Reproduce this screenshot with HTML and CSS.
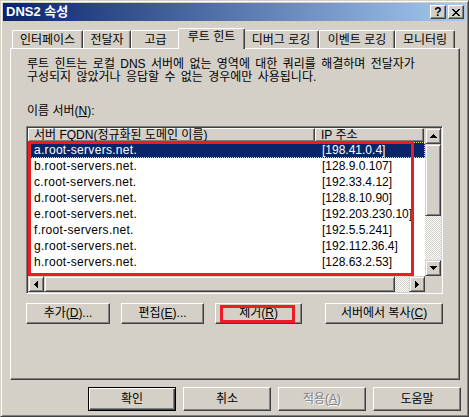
FILE: index.html
```html
<!DOCTYPE html>
<html lang="ko">
<head>
<meta charset="utf-8">
<title>DNS2 속성</title>
<link rel="stylesheet" href="styles.css">
</head>
<body>
<div class="window">
  <div class="titlebar">
    <span class="title">DNS2 속성</span>
    <div class="title-btns">
      <span class="tbtn help">?</span>
      <span class="tbtn close"><svg width="8" height="7" viewBox="0 0 8 7"><path d="M0 0h2v1h-2zM6 0h2v1h-2zM1 1h2v1h-2zM5 1h2v1h-2zM2 2h4v1h-4zM3 3h2v1h-2zM2 4h4v1h-4zM1 5h2v1h-2zM5 5h2v1h-2zM0 6h2v1h-2zM6 6h2v1h-2z" fill="#000"/></svg></span>
    </div>
  </div>
  <div class="body">
    <div class="tabs">
      <div class="tab t1">인터페이스</div>
      <div class="tab t2">전달자</div>
      <div class="tab t3">고급</div>
      <div class="tab sel">루트 힌트</div>
      <div class="tab t5">디버그 로깅</div>
      <div class="tab t6">이벤트 로깅</div>
      <div class="tab t7">모니터링</div>
    </div>
    <div class="panel">
      <p class="desc">루트 힌트는 로컬 DNS 서버에 없는 영역에 대한 쿼리를 해결하며 전달자가<br>구성되지 않았거나 응답할 수 없는 경우에만 사용됩니다.</p>
      <div class="lbl">이름 서버(<u>N</u>):</div>
      <div class="list">
        <div class="list-main">
          <div class="lv-header">
            <div class="hcell c1">서버 FQDN(정규화된 도메인 이름)</div>
            <div class="hcell c2">IP 주소</div>
          </div>
          <div class="lv-rows">
            <div class="row sel"><span class="c1">a.root-servers.net.</span><span class="c2">[198.41.0.4]</span></div>
            <div class="row"><span class="c1">b.root-servers.net.</span><span class="c2">[128.9.0.107]</span></div>
            <div class="row"><span class="c1">c.root-servers.net.</span><span class="c2">[192.33.4.12]</span></div>
            <div class="row"><span class="c1">d.root-servers.net.</span><span class="c2">[128.8.10.90]</span></div>
            <div class="row"><span class="c1">e.root-servers.net.</span><span class="c2">[192.203.230.10]</span></div>
            <div class="row"><span class="c1">f.root-servers.net.</span><span class="c2">[192.5.5.241]</span></div>
            <div class="row"><span class="c1">g.root-servers.net.</span><span class="c2">[192.112.36.4]</span></div>
            <div class="row"><span class="c1">h.root-servers.net.</span><span class="c2">[128.63.2.53]</span></div>
          </div>
        </div>
        <div class="vscroll">
          <div class="sb-btn"><svg width="7" height="4" viewBox="0 0 7 4"><path d="M3 0h1v1h1v1h1v1h1v1H0V3h1V2h1V1h1z" fill="#000"/></svg></div>
          <div class="thumb v"></div>
          <div class="track"></div>
          <div class="sb-btn"><svg width="7" height="4" viewBox="0 0 7 4"><path d="M0 0h7v1h-1v1h-1v1h-1v1h-1v-1h-1v-1h-1v-1h-1z" fill="#000"/></svg></div>
        </div>
        <div class="hscroll">
          <div class="sb-btn"><svg width="4" height="7" viewBox="0 0 4 7"><path d="M3 0h1v7h-1v-1h-1v-1h-1v-1h-1v-1h1v-1h1v-1h1z" fill="#000"/></svg></div>
          <div class="thumb h"></div>
          <div class="track"></div>
          <div class="sb-btn"><svg width="4" height="7" viewBox="0 0 4 7"><path d="M0 0h1v1h1v1h1v1h1v1h-1v1h-1v1h-1v1h-1z" fill="#000"/></svg></div>
        </div>
        <div class="corner"></div>
        <div class="annot list-annot"></div>
      </div>
      <div class="btn-row">
        <div class="btn add">추가(<u>D</u>)...</div>
        <div class="btn edit">편집(<u>E</u>)...</div>
        <div class="btn remove">제거(<u>R</u>)<span class="annot btn-annot"></span></div>
        <div class="btn copy">서버에서 복사(<u>C</u>)</div>
      </div>
    </div>
  </div>
  <div class="dlg-btns">
    <div class="btn dlg default">확인</div>
    <div class="btn dlg">취소</div>
    <div class="btn dlg disabled">적용(<u>A</u>)</div>
    <div class="btn dlg">도움말</div>
  </div>
</div>
</body>
</html>
```

FILE: styles.css
```css
* { box-sizing: border-box; }

html, body {
  margin: 0;
  background: #D4D0C8;
}

body {
  font-family: "Liberation Sans", "Noto Sans CJK KR", sans-serif;
  font-size: 12px;
  color: #000;
}

.window {
  width: 469px;
  height: 417px;
  border: 1px solid;
  border-color: #D4D0C8 #404040 #404040 #D4D0C8;
  box-shadow: inset 1px 1px #fff, inset -1px -1px #808080;
  padding: 2px;
  background: #D4D0C8;
  display: flex;
  flex-direction: column;
}

/* title bar */
.titlebar {
  flex: none;
  height: 18px;
  display: flex;
  align-items: center;
  justify-content: space-between;
  padding: 0 2px 0 3px;
  background: linear-gradient(to right, #0A246A, #A6CAF0);
}

.title {
  color: #fff;
  font-weight: bold;
  font-size: 13px;
  line-height: 18px;
}

.title-btns {
  display: flex;
  gap: 2px;
}

.tbtn {
  width: 16px;
  height: 14px;
  display: flex;
  align-items: center;
  justify-content: center;
  background: #D4D0C8;
  border: 1px solid;
  border-color: #fff #404040 #404040 #fff;
  box-shadow: inset -1px -1px #808080;
}

.help {
  font-weight: bold;
  font-size: 12px;
  line-height: 12px;
  padding-bottom: 1px;
}

/* tabs */
.body {
  padding: 7px 6px 0 7px;
}

.tabs {
  display: flex;
  align-items: flex-end;
  height: 20px;
  padding-left: 2px;
}

.tab {
  height: 18px;
  border-top: 1px solid #fff;
  border-left: 1px solid #fff;
  border-right: 1px solid #404040;
  box-shadow: inset -1px 0 #808080;
  border-radius: 2px 2px 0 0;
  text-align: center;
  line-height: 14px;
  padding-top: 2px;
  white-space: nowrap;
  background: #D4D0C8;
}

.t1 { width: 71px; }
.t2 { width: 48px; }
.t3 { width: 49px; }
.t5 { width: 76px; }
.t6 { width: 76px; }
.t7 { width: 60px; }

.tab.sel {
  width: 67px;
  height: 21px;
  margin: 0 -2px -1px;
  position: relative;
  z-index: 1;
  padding-top: 1px;
}

/* panel */
.panel {
  height: 332px;
  border: 1px solid;
  border-color: #fff #404040 #404040 #fff;
  box-shadow: inset -1px -1px #808080;
  padding: 9px 16px 0 15px;
}

.desc {
  margin: 0;
  line-height: 13px;
  padding-left: 1px;
  word-spacing: 2px;
  white-space: nowrap;
}

.lbl {
  margin-top: 21px;
  line-height: 13px;
  padding-left: 1px;
}

/* list view */
.list {
  margin-top: 8px;
  height: 168px;
  position: relative;
  display: grid;
  grid-template-columns: 1fr 16px;
  grid-template-rows: 1fr 16px;
  border: 1px solid;
  border-color: #808080 #fff #fff #808080;
  padding: 1px;
  box-shadow: inset 1px 1px #404040, inset -1px -1px #D4D0C8;
  background: #D4D0C8;
}

.list-main {
  overflow: hidden;
  background: #fff;
}

.lv-header {
  display: flex;
  height: 14px;
  background: #D4D0C8;
}

.hcell {
  height: 14px;
  border: 1px solid;
  border-color: #fff #404040 #404040 #fff;
  box-shadow: inset -1px -1px #808080;
  line-height: 12px;
  padding-left: 5px;
  white-space: nowrap;
}

.hcell.c1 { width: 287px; }
.hcell.c2 { width: 109px; }

.row {
  display: flex;
  height: 16px;
  line-height: 16px;
  white-space: nowrap;
}

.row .c1 { width: 287px; padding-left: 6px; letter-spacing: 0.3px; }
.row .c2 { padding-left: 7px; }

.row.sel {
  background: #0A246A;
  color: #fff;
  outline: 1px dotted #F5DB95;
  outline-offset: -1px;
}

/* scrollbars */
.vscroll {
  display: flex;
  flex-direction: column;
}

.hscroll {
  display: flex;
}

.sb-btn {
  flex: none;
  width: 16px;
  height: 16px;
  display: flex;
  align-items: center;
  justify-content: center;
  background: #D4D0C8;
  border: 1px solid;
  border-color: #D4D0C8 #404040 #404040 #D4D0C8;
  box-shadow: inset 1px 1px #fff, inset -1px -1px #808080;
}

.thumb {
  flex: none;
  background: #D4D0C8;
  border: 1px solid;
  border-color: #D4D0C8 #404040 #404040 #D4D0C8;
  box-shadow: inset 1px 1px #fff, inset -1px -1px #808080;
}

.thumb.v { height: 72px; }
.thumb.h { width: 351px; }

.track {
  flex: 1;
  background-color: #fff;
  background-image: repeating-conic-gradient(#D4D0C8 0 25%, #fff 0 50%);
  background-size: 2px 2px;
}

.corner {
  background: #D4D0C8;
}

/* red annotation boxes */
.annot {
  position: absolute;
  border: 3px solid #ED1C24;
  pointer-events: none;
}

.list-annot {
  left: 1px;
  top: 14px;
  width: 386px;
  height: 135px;
}

.btn-annot {
  left: 4px;
  top: 1px;
  width: 75px;
  height: 18px;
}

/* buttons */
.btn-row {
  display: flex;
  margin-top: 9px;
  height: 21px;
}

.btn {
  height: 21px;
  border: 1px solid;
  border-color: #fff #404040 #404040 #fff;
  box-shadow: inset -1px -1px #808080;
  background: #D4D0C8;
  text-align: center;
  line-height: 19px;
  white-space: nowrap;
}

.btn.add { width: 84px; margin-right: 11px; }
.btn.edit { width: 83px; margin-right: 11px; }
.btn.remove { width: 87px; position: relative; }
.btn.copy { width: 118px; margin-left: auto; }

.dlg-btns {
  display: flex;
  justify-content: flex-end;
  gap: 7px;
  padding: 7px 5px 0 0;
}

.btn.dlg {
  width: 88px;
  height: 24px;
  line-height: 22px;
}

.btn.default {
  border-color: #000;
  box-shadow: inset 1px 1px #fff, inset -1px -1px #404040, inset -2px -2px #808080;
}

.btn.disabled {
  color: #808080;
  text-shadow: 1px 1px #fff;
}
```
